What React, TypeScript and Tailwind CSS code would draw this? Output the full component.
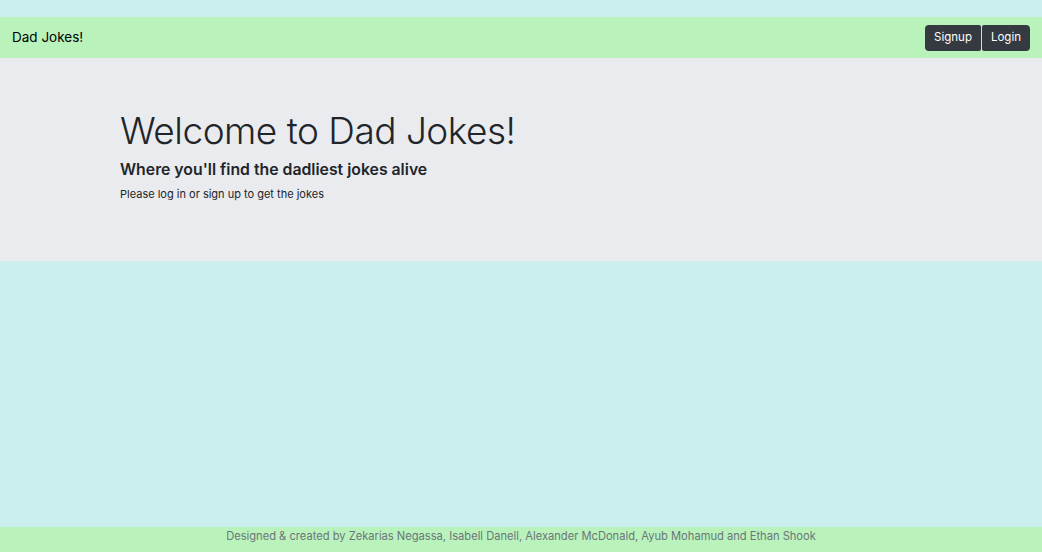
import React from "react";

const App: React.FC = () => {
  return (
    <div
      className="flex flex-col min-h-screen bg-[#cbefec] text-[#212529]"
      style={{ fontFamily: "Inter, 'Noto Sans', sans-serif" }}
    >
      {/* Navbar */}
      <nav className="mt-[17px] flex items-center justify-between h-[41px] px-3 bg-[#b9f3bb]">
        <span className="text-[13.5px] text-black">Dad Jokes!</span>
        <div className="flex">
          <button className="h-[26px] pt-px px-[9px] text-[11.5px] text-white bg-[#343a40] rounded-l-[4px] rounded-r-[2px]">
            Signup
          </button>
          <button className="h-[26px] pt-px px-[9px] ml-px text-[11.5px] text-white bg-[#343a40] rounded-r-[4px] rounded-l-[2px]">
            Login
          </button>
        </div>
      </nav>

      {/* Jumbotron */}
      <section className="h-[203px] bg-[#e9ebef] pl-[120px] pt-[51px]">
        <h1 className="text-[37px] font-light leading-[44px] tracking-[-0.5px]">
          Welcome to Dad Jokes!
        </h1>
        <h2 className="mt-[6px] text-[15.8px] font-semibold leading-[22px]">
          Where you'll find the dadliest jokes alive
        </h2>
        <p className="mt-[4px] text-[11px] leading-[18px]">
          Please log in or sign up to get the jokes
        </p>
      </section>

      <main className="flex-1" />

      {/* Footer */}
      <footer className="h-[25px] flex justify-center bg-[#b9f3bb] text-[11.15px] leading-[18px] text-[#6c757d]">
        Designed &amp; created by Zekarias Negassa, Isabell Danell, Alexander McDonald, Ayub Mohamud and Ethan Shook
      </footer>
    </div>
  );
};

export default App;
